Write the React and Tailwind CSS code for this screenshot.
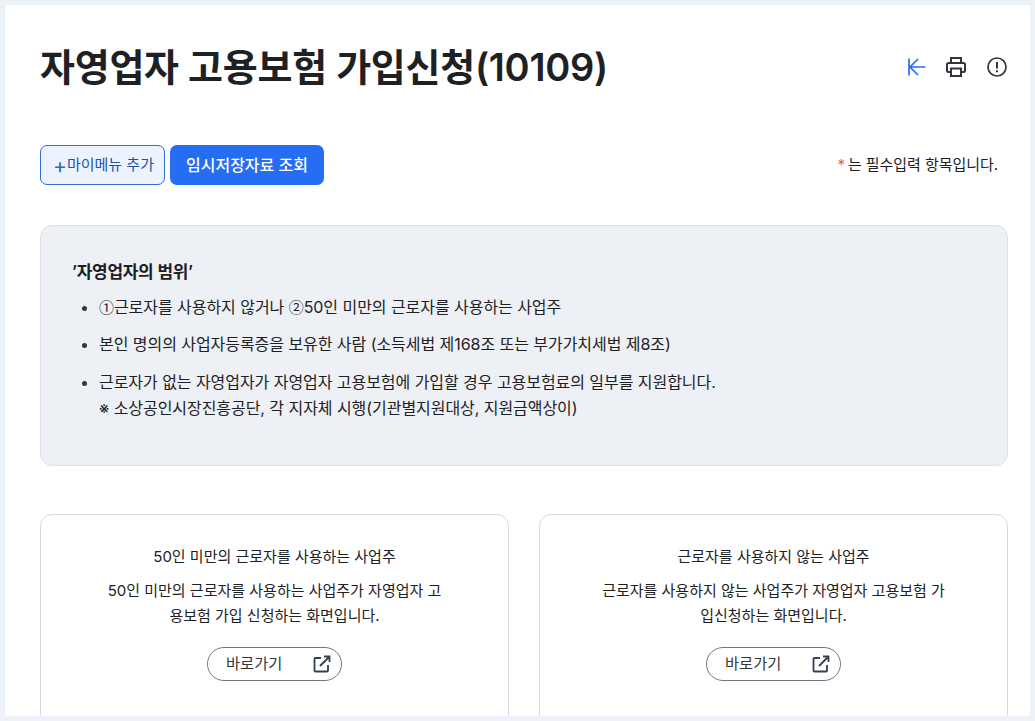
import React from 'react';

const Card = ({ title, desc }) => (
  <div className="flex-1 h-[260px] border border-[#d5d9e0] rounded-xl bg-white pt-[30px] text-center text-[#1e2124]">
    <p className="text-[15px] leading-6">{title}</p>
    <p className="mt-[9px] text-[15px] leading-[25px] whitespace-pre">{desc}</p>
    <a className="mt-[19px] mx-auto w-[135px] h-[34px] border border-[#6d7882] rounded-full flex items-center pl-[18px] pr-[10px] justify-between text-[15.3px] text-[#33363d]">
      <span>바로가기</span>
      <svg width="18" height="18" viewBox="0 0 18 18" fill="none" stroke="#33414f" strokeWidth="1.8">
        <path d="M8 3H2.500a1 1 0 0 0-1 1v11.500a1 1 0 0 0 1 1H14a1 1 0 0 0 1-1V10" />
        <path d="M11 1.500h5.500V7M16.500 1.500L7 11" />
      </svg>
    </a>
  </div>
);

const Circled = ({ children }) => (
  <span className="font-['Noto_Sans_CJK_KR',sans-serif] text-[15px]">{children}</span>
);

export default function App() {
  return (
    <div className="h-[721px] overflow-hidden bg-[#edf1f8] p-[5px] pb-0 font-['Inter','Noto_Sans_CJK_KR',sans-serif]">
      <div className="h-[711px] overflow-hidden bg-white pl-[35px] pr-[22px]">
        <div className="flex items-start justify-between pt-[33px] h-[140px]">
          <h1 className="text-[38px] leading-[58px] font-semibold tracking-[-0.27px] text-[#1e2124]">자영업자 고용보험 가입신청(10109)</h1>
          <div className="flex items-center pt-[19px] pr-[1px]">
            <svg width="20" height="20" viewBox="0 0 20 20" fill="none" stroke="#256ef4" strokeWidth="1.7">
              <path d="M3 1.500v17M19.500 10H5M12 2l-8 8 8 8" />
            </svg>
            <svg className="ml-[20px]" width="20" height="20" viewBox="0 0 20 20" fill="none" stroke="#33363d" strokeWidth="2">
              <path d="M5 6V1h10v5" />
              <path d="M5 15H2.500A1.500 1.500 0 0 1 1 13.500V7.500A1.500 1.500 0 0 1 2.500 6h15A1.500 1.500 0 0 1 19 7.500v6a1.500 1.500 0 0 1-1.500 1.500H15" />
              <path d="M5 11.500h10V19H5z" />
            </svg>
            <svg className="ml-[21px]" width="20" height="20" viewBox="0 0 20 20" fill="none" stroke="#33363d" strokeWidth="1.700">
              <circle cx="10" cy="10" r="9" />
              <path strokeWidth="2" d="M10 5v6.500M10 13.200v2" />
            </svg>
          </div>
        </div>

        <div className="flex items-center justify-between h-[40px]">
          <div className="flex gap-[5px]">
            <button className="h-[40px] w-[125px] border border-[#2f6fd8] rounded-[7px] bg-[#ecf2fe] text-[#2252a8] text-[15px] flex items-center justify-center pl-[2px]">
              <span className="text-[21px] leading-none text-[#2f66c8]">+</span>마이메뉴 추가
            </button>
            <button className="h-[40px] w-[154px] rounded-[7px] bg-[#256ef4] text-white text-[16px] font-medium">임시저장자료 조회</button>
          </div>
          <p className="text-[15px] text-[#1e2124] pr-[10px] tracking-[-0.05px]"><span className="text-[#e8595f] mr-[3px]">*</span>는 필수입력 항목입니다.</p>
        </div>

        <div className="mt-[40px] h-[241px] rounded-xl border border-[#dde1e7] bg-[#edf0f4] pl-[31px] pt-[34px] text-[#1e2124] text-[16px] tracking-[-0.05px]">
          <p className="font-semibold leading-6 text-[17px] tracking-[-0.3px]">’자영업자의 범위’</p>
          <ul className="mt-[11px] list-disc pl-[27px] space-y-[13px] marker:text-[#33363d]">
            <li className="leading-6"><Circled>①</Circled>근로자를 사용하지 않거나 <Circled>②</Circled>50인 미만의 근로자를 사용하는 사업주</li>
            <li className="leading-6">본인 명의의 사업자등록증을 보유한 사람 (소득세법 제168조 또는 부가가치세법 제8조)</li>
            <li className="leading-[26px]">근로자가 없는 자영업자가 자영업자 고용보험에 가입할 경우 고용보험료의 일부를 지원합니다.<br />※ 소상공인시장진흥공단, 각 지자체 시행(기관별지원대상, 지원금액상이)</li>
          </ul>
        </div>

        <div className="mt-[48px] flex gap-[30px]">
          <Card title="50인 미만의 근로자를 사용하는 사업주" desc={'50인 미만의 근로자를 사용하는 사업주가 자영업자 고\n용보험 가입 신청하는 화면입니다.'} />
          <Card title="근로자를 사용하지 않는 사업주" desc={'근로자를 사용하지 않는 사업주가 자영업자 고용보험 가\n입신청하는 화면입니다.'} />
        </div>
      </div>
    </div>
  );
}
